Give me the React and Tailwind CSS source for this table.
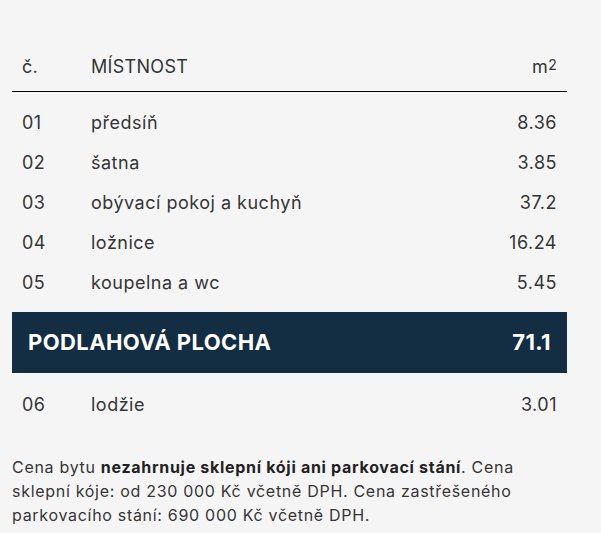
import React from "react";

const rows = [
  ["01", "předsíň", "8.36"],
  ["02", "šatna", "3.85"],
  ["03", "obývací pokoj a kuchyň", "37.2"],
  ["04", "ložnice", "16.24"],
  ["05", "koupelna a wc", "5.45"],
];

function Row({ n, name, v }) {
  return (
    <div className="flex h-10 items-center px-[10px] text-[18px] tracking-[0.5px] text-[#353535]">
      <div className="w-[69px]">{n}</div>
      <div className="flex-1">{name}</div>
      <div className="text-right">{v}</div>
    </div>
  );
}

export default function App() {
  return (
    <div
      className="min-h-[533px] w-full bg-[#f5f5f5] px-3 pt-[55px]"
      style={{ fontFamily: "Inter, 'Open Sans', sans-serif" }}
    >
      <div className="w-[555px]">
        <div className="flex border-b border-black px-[10px] pb-[12px] text-[18px] leading-6 tracking-[0.3px] text-[#353535]">
          <div className="w-[69px]">č.</div>
          <div className="flex-1">MÍSTNOST</div>
          <div className="text-right">
            m<sup className="relative top-[-3px] text-[14px]">2</sup>
          </div>
        </div>
        <div className="mt-[10px]">
          {rows.map((r) => (
            <Row key={r[0]} n={r[0]} name={r[1]} v={r[2]} />
          ))}
        </div>
        <div className="mt-[10px] flex h-[61px] items-center justify-between bg-[#132d42] px-4 text-[22px] font-bold tracking-[0.4px] text-white">
          <div>PODLAHOVÁ PLOCHA</div>
          <div>71.1</div>
        </div>
        <div className="mt-[11px]">
          <Row n="06" name="lodžie" v="3.01" />
        </div>
      </div>
      <p className="mt-[31px] text-[16px] leading-6 tracking-[0.7px] text-[#353535]">
        Cena bytu <b className="font-bold text-[#222]">nezahrnuje sklepní kóji ani parkovací stání</b>. Cena
        <br />
        sklepní kóje: od 230 000 Kč včetně DPH. Cena zastřešeného
        <br />
        parkovacího stání: 690 000 Kč včetně DPH.
      </p>
    </div>
  );
}
